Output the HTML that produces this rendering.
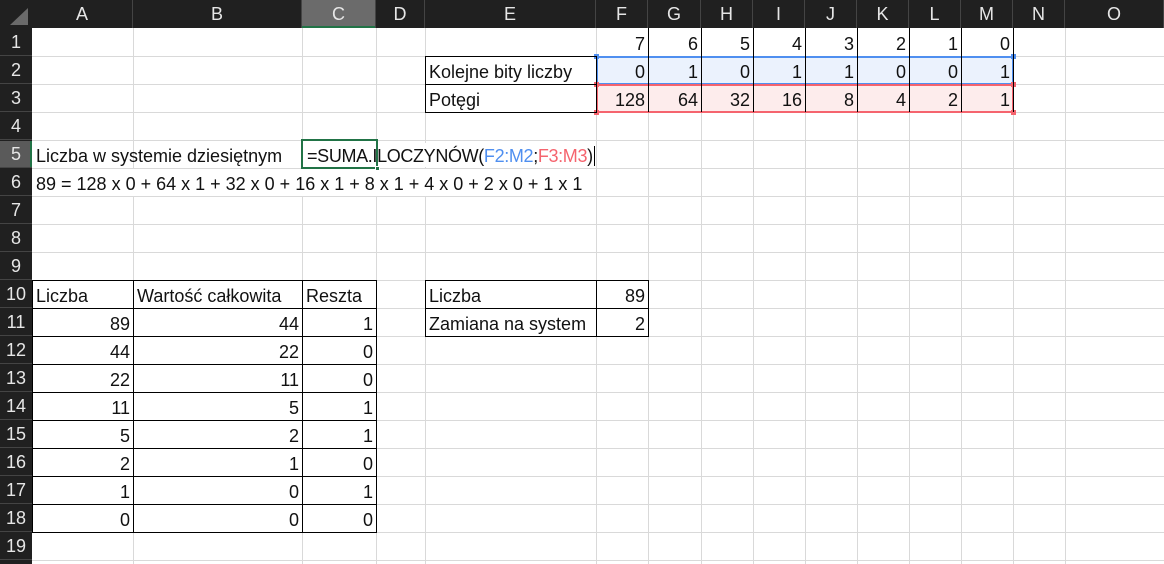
<!DOCTYPE html>
<html><head><meta charset="utf-8"><style>
*{margin:0;padding:0;box-sizing:border-box}
body{width:1164px;height:564px;overflow:hidden;background:#fff;position:relative;font-family:"Liberation Sans",sans-serif;}
.a{position:absolute}
.h{position:absolute;background:#202020;color:#e6e6e6;font-size:18px;text-align:center;line-height:29px}
.v{position:absolute;width:1px;background:#d9d9d9}
.hl{position:absolute;height:1px;background:#d9d9d9}
.t{position:absolute;height:27px;line-height:31px;font-size:18px;color:#111;white-space:nowrap}
.r{text-align:right;padding-right:3px}
.l{padding-left:3px}
.bk{position:absolute;background:#000}
</style></head><body>
<div class="a" style="left:0;top:0;width:1164px;height:28px;background:#202020"></div>
<div class="a" style="left:0;top:0;width:32px;height:564px;background:#202020"></div>
<div class="a" style="left:10px;top:8px;width:0;height:0;border-left:18px solid transparent;border-bottom:17px solid #6a6a6a"></div>
<div class="a" style="left:302px;top:0;width:75px;height:28px;background:#6b6b6b;border-bottom:2px solid #217346"></div>
<div class="a" style="left:0;top:141px;width:32px;height:27px;background:#5a5a5a;border-right:2px solid #217346"></div>
<div id="hdr"></div>
<div id="grid"></div>
<div class="a" style="left:596px;top:56px;width:418px;height:29px;background:#ebf2fd;border:2px solid #4f8ff0"></div>
<div class="a" style="left:596px;top:84px;width:418px;height:29px;background:#fdecec;border:2px solid #f5646e"></div>
<div class="a" style="left:594px;top:54px;width:5px;height:5px;background:#4f8ff0"></div>
<div class="a" style="left:1011px;top:54px;width:5px;height:5px;background:#4f8ff0"></div>
<div class="a" style="left:594px;top:82px;width:5px;height:5px;background:#f5646e"></div>
<div class="a" style="left:1011px;top:82px;width:5px;height:5px;background:#f5646e"></div>
<div class="a" style="left:594px;top:110px;width:5px;height:5px;background:#f5646e"></div>
<div class="a" style="left:1011px;top:110px;width:5px;height:5px;background:#f5646e"></div>
<div id="bd"></div>
<div id="tx"></div>
<div class="a" style="left:301px;top:139px;width:77px;height:30px;border:2px solid #217346"></div>
<div class="a" style="left:375px;top:166px;width:5px;height:5px;background:#217346;border:1px solid #fff"></div>
<div class="a" style="left:380px;top:143px;width:214px;height:24px;background:#fff"></div>
<div class="t l" style="left:304px;top:141px;letter-spacing:-0.35px"><span style="border-right:1px solid #000;padding-right:1px">=SUMA.ILOCZYNÓW(<span style="color:#4f8ff0">F2:M2</span>;<span style="color:#f5646e">F3:M3</span>)</span></div>
<script>
const X=[32,133,302,376,425,596,648,701,753,805,857,909,961,1013,1065,1164];
const L="ABCDEFGHIJKLMNO";
let h='';
for(let i=0;i<15;i++){h+=`<div class="h" style="left:${X[i]}px;top:0;width:${X[i+1]-X[i]}px;height:28px;${i==2?'background:transparent':''};border-right:1px solid #444">${L[i]}</div>`;}
for(let r=1;r<=19;r++){h+=`<div class="h" style="left:0;top:${28+(r-1)*28}px;width:32px;height:28px;${r==5?'background:transparent':''};border-bottom:1px solid #444">${r}</div>`;}
document.getElementById('hdr').innerHTML=h;
let g='';
for(let i=1;i<X.length;i++)g+=`<div class="v" style="left:${X[i]}px;top:28px;height:536px"></div>`;
for(let r=1;r<=19;r++)g+=`<div class="hl" style="left:32px;top:${28+r*28}px;width:1132px"></div>`;
document.getElementById('grid').innerHTML=g;
let b='';
function box(x1,y1,x2,y2){b+=`<div class="bk" style="left:${x1}px;top:${y1}px;width:${x2-x1+1}px;height:1px"></div><div class="bk" style="left:${x1}px;top:${y2}px;width:${x2-x1+1}px;height:1px"></div><div class="bk" style="left:${x1}px;top:${y1}px;width:1px;height:${y2-y1}px"></div><div class="bk" style="left:${x2}px;top:${y1}px;width:1px;height:${y2-y1}px"></div>`;}
const RY=r=>28+(r-1)*28;
box(425,56,596,84);box(425,84,596,112);
for(let i=6;i<=13;i++)b+=`<div class="bk" style="left:${X[i]}px;top:28px;width:1px;height:84px"></div>`;
for(let r=10;r<=18;r++){box(32,RY(r),133,RY(r+1));box(133,RY(r),302,RY(r+1));box(302,RY(r),376,RY(r+1));}
for(let r=10;r<=11;r++){box(425,RY(r),596,RY(r+1));box(596,RY(r),648,RY(r+1));}
document.getElementById('bd').innerHTML=b;
let t='';
function c(ci,r,s,right,extra=''){const x=X[ci];t+=`<div class="t ${right?'r':'l'}" style="left:${x+1}px;top:${RY(r)+1}px;width:${X[ci+1]-x-1}px;${extra}">${s}</div>`;}
[7,6,5,4,3,2,1,0].forEach((v,i)=>c(5+i,1,v,1));
[0,1,0,1,1,0,0,1].forEach((v,i)=>c(5+i,2,v,1));
[128,64,32,16,8,4,2,1].forEach((v,i)=>c(5+i,3,v,1));
c(4,2,'Kolejne bity liczby');c(4,3,'Potęgi');
t+=`<div class="t l" style="left:33px;top:${RY(5)+1}px">Liczba w systemie dziesiętnym</div>`;
t+=`<div class="t l" style="left:33px;top:${RY(6)+1}px;background:#fff">89 = 128 x 0 + 64 x 1 + 32 x 0 + 16 x 1 + 8 x 1 + 4 x 0 + 2 x 0 + 1 x 1</div>`;
c(0,10,'Liczba');c(1,10,'Wartość całkowita');c(2,10,'Reszta');
const d=[[89,44,1],[44,22,0],[22,11,0],[11,5,1],[5,2,1],[2,1,0],[1,0,1],[0,0,0]];
d.forEach((row,i)=>row.forEach((v,j)=>c(j,11+i,v,1)));
c(4,10,'Liczba');c(5,10,'89',1);c(4,11,'Zamiana na system');c(5,11,'2',1);
document.getElementById('tx').innerHTML=t;
</script>
</body></html>
